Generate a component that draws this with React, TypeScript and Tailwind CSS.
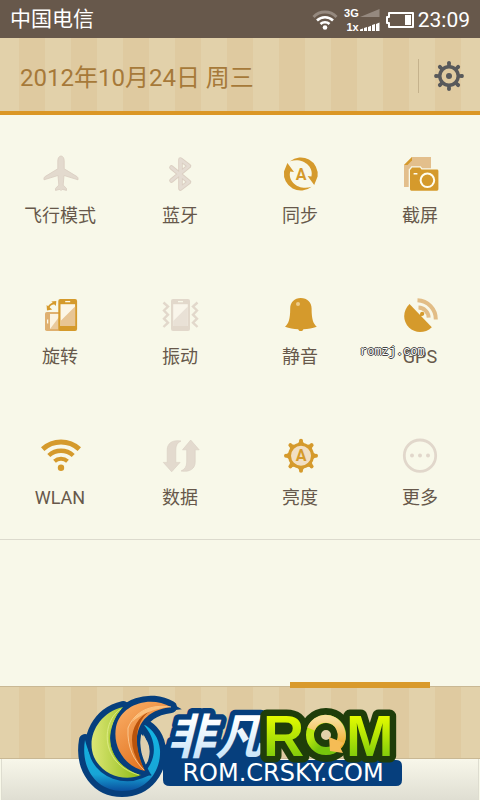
import type { ReactNode } from "react";

const STRIPES =
  "bg-[repeating-linear-gradient(90deg,#e2d1aa_0px,#e2d1aa_19px,#dfcaa0_19px,#dfcaa0_45px,#e2d1aa_45px,#e2d1aa_52px)]";

const ON = "#d59a2c";
const ON_SOFT = "#e2bd86";
const OFF = "#e3dace";

function Icon({ children }: { children: ReactNode }) {
  return (
    <svg width="40" height="40" viewBox="0 0 40 40" fill="none" overflow="visible" aria-hidden="true">
      {children}
    </svg>
  );
}

function LetterA({ x, y }: { x: number; y: number }) {
  return (
    <text x={x} y={y} textAnchor="middle" fontSize="16" fontWeight="700" fontFamily="Roboto, sans-serif" fill={ON}>
      A
    </text>
  );
}

const AirplaneIcon = () => (
  <Icon>
    <path
      d="M21 2c-2 0-3.2 2.2-3.2 5v7.8L5 22.6c-.8.6-1.3 1.6-1 3.2l14-4.3.8 9.6-3.3 3.3v2l4.5-1.1 1 1.3 1-1.3 4.5 1.1v-2l-3.3-3.3.8-9.600 14 4.300c.3-1.600-.2-2.600-1-3.200l-12.800-7.800V7c0-2.800-1.200-5-3.200-5z"
      fill={OFF}
      stroke="#d9cdc0"
      strokeWidth="0.8"
    />
  </Icon>
);

const BluetoothIcon = () => (
  <Icon>
    <path d="M11.500 13.500l17.500 14.500L20.500 34.500V5.500L29 12 11.500 26.500" stroke="#dbcfc2" strokeWidth="4.600" strokeLinecap="round" strokeLinejoin="round" />
    <path d="M11.500 13.500l17.500 14.500L20.500 34.500V5.500L29 12 11.500 26.500" stroke="#e5dcd2" strokeWidth="2.800" strokeLinecap="round" strokeLinejoin="round" />
  </Icon>
);

const SYNC_ARM = "M10 7.2A17 17 0 0 1 37.6 22.5L34.2 31 27.6 22l3.8.6C34.2 12 22 3 10 7.2z";
const SyncIcon = () => (
  <Icon>
    <path d={SYNC_ARM} fill={ON} />
    <path d={SYNC_ARM} fill={ON} transform="rotate(180 20.8 20)" />
    <LetterA x={21} y={26} />
  </Icon>
);

const ScreenshotIcon = () => (
  <Icon>
    <path d="M12 3h19v30H4V11z" fill="#e3bf8c" />
    <path d="M12 3v3.500L7.500 11H4z" fill={ON} />
    <path
      d="M11 15l1-1.5h8l1.5 2H37a1.4 1.4 0 0 1 1.4 1.4v18.4a1.4 1.4 0 0 1-1.4 1.4H11.4a1.4 1.4 0 0 1-1.4-1.4V16z"
      fill={ON}
      stroke="#f8f8e9"
      strokeWidth="2.6"
      paintOrder="stroke"
    />
    <circle cx="27.4" cy="26.3" r="6.8" stroke="#fffdf0" strokeWidth="2" />
    <rect x="13.5" y="19" width="4" height="1.6" rx="0.6" fill="#fffdf0" />
  </Icon>
);

const RotateIcon = () => (
  <Icon>
    <rect x="5" y="17" width="17" height="19" rx="1.8" fill="#dfb070" />
    <path d="M10 19h9v15h-9z" fill="#fbf3e2" />
    <path d="M19 22v12h-9z" fill="#e9c99c" />
    <path d="M7.6 24.5v4" stroke="#fdf8e8" strokeWidth="1.3" />
    <rect x="18.3" y="4" width="18.8" height="32" rx="2" fill={ON} />
    <path d="M20.5 9.2h14.6V31H20.5z" fill="#fcf6e6" />
    <path d="M35.1 11.500V31H20.5v-5z" fill="#e8c594" />
    <path d="M25.2 6.6h5" stroke="#fdf8e8" strokeWidth="1.3" />
    <path d="M8.3 13.2Q9.5 9 14.3 8.4" stroke={ON} strokeWidth="1.8" />
    <path d="M6.6 10l.4 5.4 5.2-1zM11.4 6.4l4.9-.5-.4 5z" fill={ON} />
  </Icon>
);

const VibrateIcon = () => (
  <Icon>
    <rect x="11" y="4" width="19" height="32" rx="2" fill="#e2d8cb" />
    <path d="M13.2 9.2h14.6V31H13.2z" fill="#f9f5ea" />
    <path d="M27.8 11.500V31H13.2v-5z" fill="#e9e1d6" />
    <path d="M18 6.6h5" stroke="#f8f8e9" strokeWidth="1.3" />
    <path
      d="M3.5 7.5L8 11.5l-4 4 4 4.2-4 4 4 4-4.5 4.3M37.5 7.5L33 11.5l4 4-4 4.2 4 4-4 4 4.5 4.3"
      stroke="#e2d8cb"
      strokeWidth="2.4"
    />
  </Icon>
);

const BellIcon = () => (
  <Icon>
    <path
      d="M20.8 3C14.4 3 10.2 7.6 10.2 13.4c0 10.6-1.6 15-5.2 18.4 4.2 1.6 8.6 2.2 13.2 2.4.4 1.2 1.4 1.9 2.6 1.9s2.2-.7 2.6-1.9c4.6-.2 9.2-.8 13.4-2.4-3.6-3.4-5.2-7.8-5.2-18.4C31.6 7.6 27.2 3 20.8 3z"
      fill={ON}
    />
    <circle cx="18" cy="9" r="2" fill="#edcb8a" />
  </Icon>
);

const GpsIcon = () => (
  <Icon>
    <path d="M9.5 9L31.8 32.2C25 38.8 15 38.5 9 32.6 2.5 26 2.5 16 9.5 9z" fill={ON} />
    <path d="M17 24l5-5" stroke={ON} strokeWidth="2" />
    <circle cx="22.2" cy="18.8" r="2.1" fill={ON} />
    <path d="M18.5 12.6A10.5 10.5 0 0 1 28.7 22.6M17.5 5.2A19 19 0 0 1 35.8 24.5" stroke={ON_SOFT} strokeWidth="4" />
  </Icon>
);

const WlanIcon = () => (
  <Icon>
    <path d="M2.7 13.2A27 27 0 0 1 39.3 13.2" stroke={ON} strokeWidth="5" />
    <path d="M8.8 19.5A18 18 0 0 1 33.2 19.5" stroke={ON} strokeWidth="4.4" />
    <path d="M14.5 25.2A9.6 9.6 0 0 1 27.5 25.2" stroke={ON} strokeWidth="4" />
    <circle cx="21" cy="31.8" r="3.2" fill={ON} />
  </Icon>
);

const DataIcon = () => (
  <Icon>
    <path
      d="M21 5C12 3.5 7.2 7.5 7.2 14v12.4H3.3l8.4 9.4 8.4-9.4h-4.3V14c0-4.5 1.6-7.5 5.2-9z"
      fill={OFF}
      stroke="#d9cec2"
      strokeWidth="0.6"
    />
    <path
      d="M21 35C30 36.5 35.2 32.5 35.2 26V13.8h4L30.7 4l-8.2 9.8h4.2V26c0 4.5-2 7.5-5.7 9z"
      fill={OFF}
      stroke="#d9cec2"
      strokeWidth="0.6"
    />
  </Icon>
);

const KNOBS = [0, 45, 90, 135, 180, 225, 270, 315];

const BrightnessIcon = () => (
  <Icon>
    {KNOBS.map((deg) => (
      <g key={deg} transform={`rotate(${deg} 21 19.7)`}>
        <path d="M17 9L20 4h2l3 5z" fill={ON} />
        <circle cx="21" cy="4.7" r="2" fill={ON} />
      </g>
    ))}
    <circle cx="21" cy="19.7" r="13" fill={ON} />
    <circle cx="21" cy="19.7" r="10" fill="#f1dfc4" />
    <LetterA x={21} y={25} />
  </Icon>
);

const MoreIcon = () => (
  <Icon>
    <circle cx="20" cy="19.7" r="15.7" stroke="#e1d7cb" strokeWidth="2.8" />
    <circle cx="12" cy="19.5" r="2" fill="#e1d7cb" />
    <circle cx="20" cy="19.5" r="2" fill="#e1d7cb" />
    <circle cx="28" cy="19.5" r="2" fill="#e1d7cb" />
  </Icon>
);

const toggles = [
  { label: "飞行模式", icon: <AirplaneIcon />, active: false },
  { label: "蓝牙", icon: <BluetoothIcon />, active: false },
  { label: "同步", icon: <SyncIcon />, active: true },
  { label: "截屏", icon: <ScreenshotIcon />, active: true },
  { label: "旋转", icon: <RotateIcon />, active: true },
  { label: "振动", icon: <VibrateIcon />, active: false },
  { label: "静音", icon: <BellIcon />, active: true },
  { label: "GPS", icon: <GpsIcon />, active: true, watermark: "romzj.com" },
  { label: "WLAN", icon: <WlanIcon />, active: true },
  { label: "数据", icon: <DataIcon />, active: false },
  { label: "亮度", icon: <BrightnessIcon />, active: true },
  { label: "更多", icon: <MoreIcon />, active: false },
];

function StatusBar() {
  return (
    <div className="flex h-[38px] items-center justify-between bg-[#67584b] px-2.5 text-[21px] leading-6 text-white">
      <span>中国电信</span>
      <div className="flex items-center pt-0.5">
        <svg width="26" height="22" viewBox="0 0 26 22" fill="none" className="mr-1.5" aria-hidden="true">
          <path d="M1.5 8A16 16 0 0 1 24.5 8" stroke="#95897f" strokeWidth="3" />
          <path d="M5 11.5A11.5 11.5 0 0 1 21 11.5M8.5 15A6.5 6.5 0 0 1 17.5 15" stroke="#fff" strokeWidth="2.6" />
          <circle cx="13" cy="18.5" r="2.3" fill="#fff" />
        </svg>
        <div className="flex flex-col text-right font-['Liberation_Sans'] text-[11px] leading-[14px] font-bold">
          <span>3G</span>
          <span>1x</span>
        </div>
        <svg width="20" height="24" viewBox="0 0 20 24" className="mr-1.5 ml-px" aria-hidden="true">
          <path d="M0 9L19.5 1v8z" fill="#95897f" />
          <path d="M0 23v-1.5l3-1V23zM4 23v-3l3-1v4zM8 23v-4l3-1.3V23zM12 23v-6l3-1v7zM16 23v-7l3.5-1.5V23z" fill="#fff" />
        </svg>
        <svg width="28" height="16" viewBox="0 0 28 16" fill="none" className="mr-1" aria-hidden="true">
          <path d="M3 1h24v14H3v-4H1V5h2z" stroke="#fff" strokeWidth="2" strokeLinejoin="round" />
          <path d="M19 3h6v10h-6z" fill="#fff" />
        </svg>
        <span>23:09</span>
      </div>
    </div>
  );
}

function DateHeader() {
  return (
    <header className={`flex h-[77px] items-center justify-between border-b-4 border-[#db9725] pt-0.5 pr-[15px] pl-5 ${STRIPES}`}>
      <h1 className="pt-1 text-2xl leading-8 text-[#a67939]">2012年10月24日 周三</h1>
      <div className="flex items-center gap-3.5">
        <span className="h-[34px] w-px bg-[#c5b28c]" />
        <button type="button" aria-label="设置">
          <svg width="32" height="32" viewBox="-16 -16 32 32" fill="none" aria-hidden="true">
            {KNOBS.map((deg) => (
              <g key={deg} transform={`rotate(${deg})`}>
                <path d="M-1.8-9h3.6v-4.500h-3.600z" fill="#58595b" />
                <circle cy="-13" r="1.9" fill="#58595b" />
              </g>
            ))}
            <circle r="9.2" stroke="#58595b" strokeWidth="3.4" />
            <circle r="3" fill="#58595b" />
          </svg>
        </button>
      </div>
    </header>
  );
}

const RING = "M85 740C80 770 98 791 122 791C148 791 161 770 160 750C159 738 153 729 143 724C156 738 157 755 148 768C136 784 96 786 85 740z";
const LEAF = "M123 707C98 713 86 738 94 757C102 775 124 782 141 775C112 767 98 738 123 707z";
const FLAME = "M171 707C150 695 121 704 116 727C112 750 128 768 145 771C131 745 132 712 171 707z";

function RomLogo() {
  return (
    <svg width="326" height="110" viewBox="77 690 326 110" fill="none" aria-label="非凡ROM" role="img">
      <defs>
        <linearGradient id="lime" x1="0" y1="0" x2="0" y2="1">
          <stop offset="0.2" stopColor="#e2fb00" />
          <stop offset="0.9" stopColor="#75c60c" />
        </linearGradient>
        <linearGradient id="ice" x1="0" y1="0" x2="0" y2="1">
          <stop offset="0.3" stopColor="#ffffff" />
          <stop offset="0.9" stopColor="#c4e2f8" />
        </linearGradient>
        <linearGradient id="cyan" x1="0" y1="0" x2="0" y2="1">
          <stop offset="0" stopColor="#12b6e4" />
          <stop offset="0.75" stopColor="#18a5d6" />
          <stop offset="1" stopColor="#0a4f9e" />
        </linearGradient>
        <linearGradient id="leaf" x1="0" y1="0" x2="1" y2="0">
          <stop offset="0" stopColor="#dce675" />
          <stop offset="1" stopColor="#8dbb14" />
        </linearGradient>
        <linearGradient id="flame" x1="0" y1="0" x2="0.6" y2="1">
          <stop offset="0" stopColor="#fbb16a" />
          <stop offset="1" stopColor="#e0701c" />
        </linearGradient>
        <linearGradient id="ring" x1="0" y1="0" x2="1" y2="1">
          <stop offset="0.3" stopColor="#b8e80e" />
          <stop offset="0.6" stopColor="#76c40c" />
        </linearGradient>
        <linearGradient id="amber" x1="0" y1="0" x2="0" y2="1">
          <stop offset="0" stopColor="#f8dd9b" />
          <stop offset="1" stopColor="#f0ab28" />
        </linearGradient>
      </defs>

      {/* swirl: dark outline first, coloured crescents on top */}
      <g stroke="#063f7d" strokeWidth="12" strokeLinejoin="round" fill="#063f7d">
        <path d={RING} />
        <path d={LEAF} />
        <path d={FLAME} />
      </g>
      <path d="M141 734Q152 743 149 757Q148 763 145 765Q138 750 141 734z" fill="#dfcfae" />
      <path d={RING} fill="url(#cyan)" />
      <path d={LEAF} fill="url(#leaf)" stroke="#063f7d" strokeWidth="7" paintOrder="stroke" />
      <path d="M121 709C103 730 106 763 139 775C112 767 98 738 121 709z" fill="#a3cc22" />
      <path d="M121 709C102 720 98 763 139 775" stroke="#e6f296" strokeWidth="0.7" />
      <path d={FLAME} fill="url(#flame)" stroke="#063f7d" strokeWidth="7" paintOrder="stroke" />
      <path d="M150 711C128 722 126 750 145 771C133 747 134 722 150 711z" fill="#b9530c" />
      <path d="M171 707C151 704 135 711 128 728C127 748 134 760 144 770" stroke="#fcd3a0" strokeWidth="0.8" />
      <path d="M170 707C152 704 138 711 132 722C143 713 153 709 170 707z" fill="#fbc07c" />

      {/* blue plate behind both lines of lettering */}
      <path d="M168 744h96v16h132q6 0 6 6v14q0 6-6 6H170q-7 0-7-6v-30q0-6 5-6z" fill="#063f7d" />
      <g strokeLinejoin="round" paintOrder="stroke" fontWeight="700">
        <text
          x="167"
          y="754"
          fontSize="48"
          fontStyle="italic"
          fontFamily="'Noto Sans CJK SC', sans-serif"
          fill="url(#ice)"
          stroke="#063f7d"
          strokeWidth="11"
        >
          非凡
        </text>
        <circle cx="326" cy="735" r="16" stroke="#1f3d0a" strokeWidth="22" />
        <g stroke="#1f3d0a" strokeWidth="13" fontSize="57" fontFamily="'Liberation Sans', sans-serif" fill="url(#lime)">
          <text x="263" y="756">
            R
          </text>
          <text x="346" y="756">
            M
          </text>
        </g>
      </g>
      <circle cx="326" cy="735" r="16" stroke="url(#ring)" strokeWidth="8" />
      <path d="M311 729C316 716 334 715 340 728C343 735 342 742 337 747" stroke="url(#amber)" strokeWidth="8" />
      <path d="M329 737l1 14 13 2-3-6 4-4z" fill="#f5bc55" />

      <text x="283" y="781" textAnchor="middle" fontSize="24" fontFamily="'DejaVu Sans', sans-serif" fill="#ffffff">
        ROM.CRSKY.COM
      </text>
    </svg>
  );
}

export default function App() {
  return (
    <div className="flex min-h-screen flex-col bg-[#f8f8e9] font-[Roboto,'Noto_Sans_CJK_SC',sans-serif]">
      <StatusBar />
      <DateHeader />

      <main className="flex-1">
        <div className="grid grid-cols-4 border-b border-[#dcdacd] pb-px">
          {toggles.map((item) => (
            <button
              key={item.label}
              type="button"
              aria-pressed={item.active}
              className="relative flex flex-col items-center gap-2.5 pt-[39px] pb-7 text-lg leading-6 text-[#67584b]"
            >
              {item.icon}
              <span>{item.label}</span>
              {item.watermark && (
                <span className="absolute top-[88px] left-0 font-['Liberation_Mono',monospace] text-xs leading-4 text-white [text-shadow:1px_0_#444,-1px_0_#444,0_1px_#444,0_-1px_#444]">
                  {item.watermark}
                </span>
              )}
            </button>
          ))}
        </div>
      </main>

      <footer className="relative">
        <div className={`h-[73px] border-y border-y-[#c9b894] ${STRIPES}`} />
        <div className="mx-px h-[41px] border-x border-[#deddd0] bg-linear-to-b from-[#f8f7ea] to-[#dfded2]" />
        <div className="absolute inset-x-0 -top-1 grid grid-cols-2">
          <span className="col-start-2 h-1.5 w-[140px] justify-self-center bg-[#d99a2b]" />
        </div>
        <div className="absolute inset-x-0 bottom-0 flex justify-center">
          <RomLogo />
        </div>
      </footer>
    </div>
  );
}
